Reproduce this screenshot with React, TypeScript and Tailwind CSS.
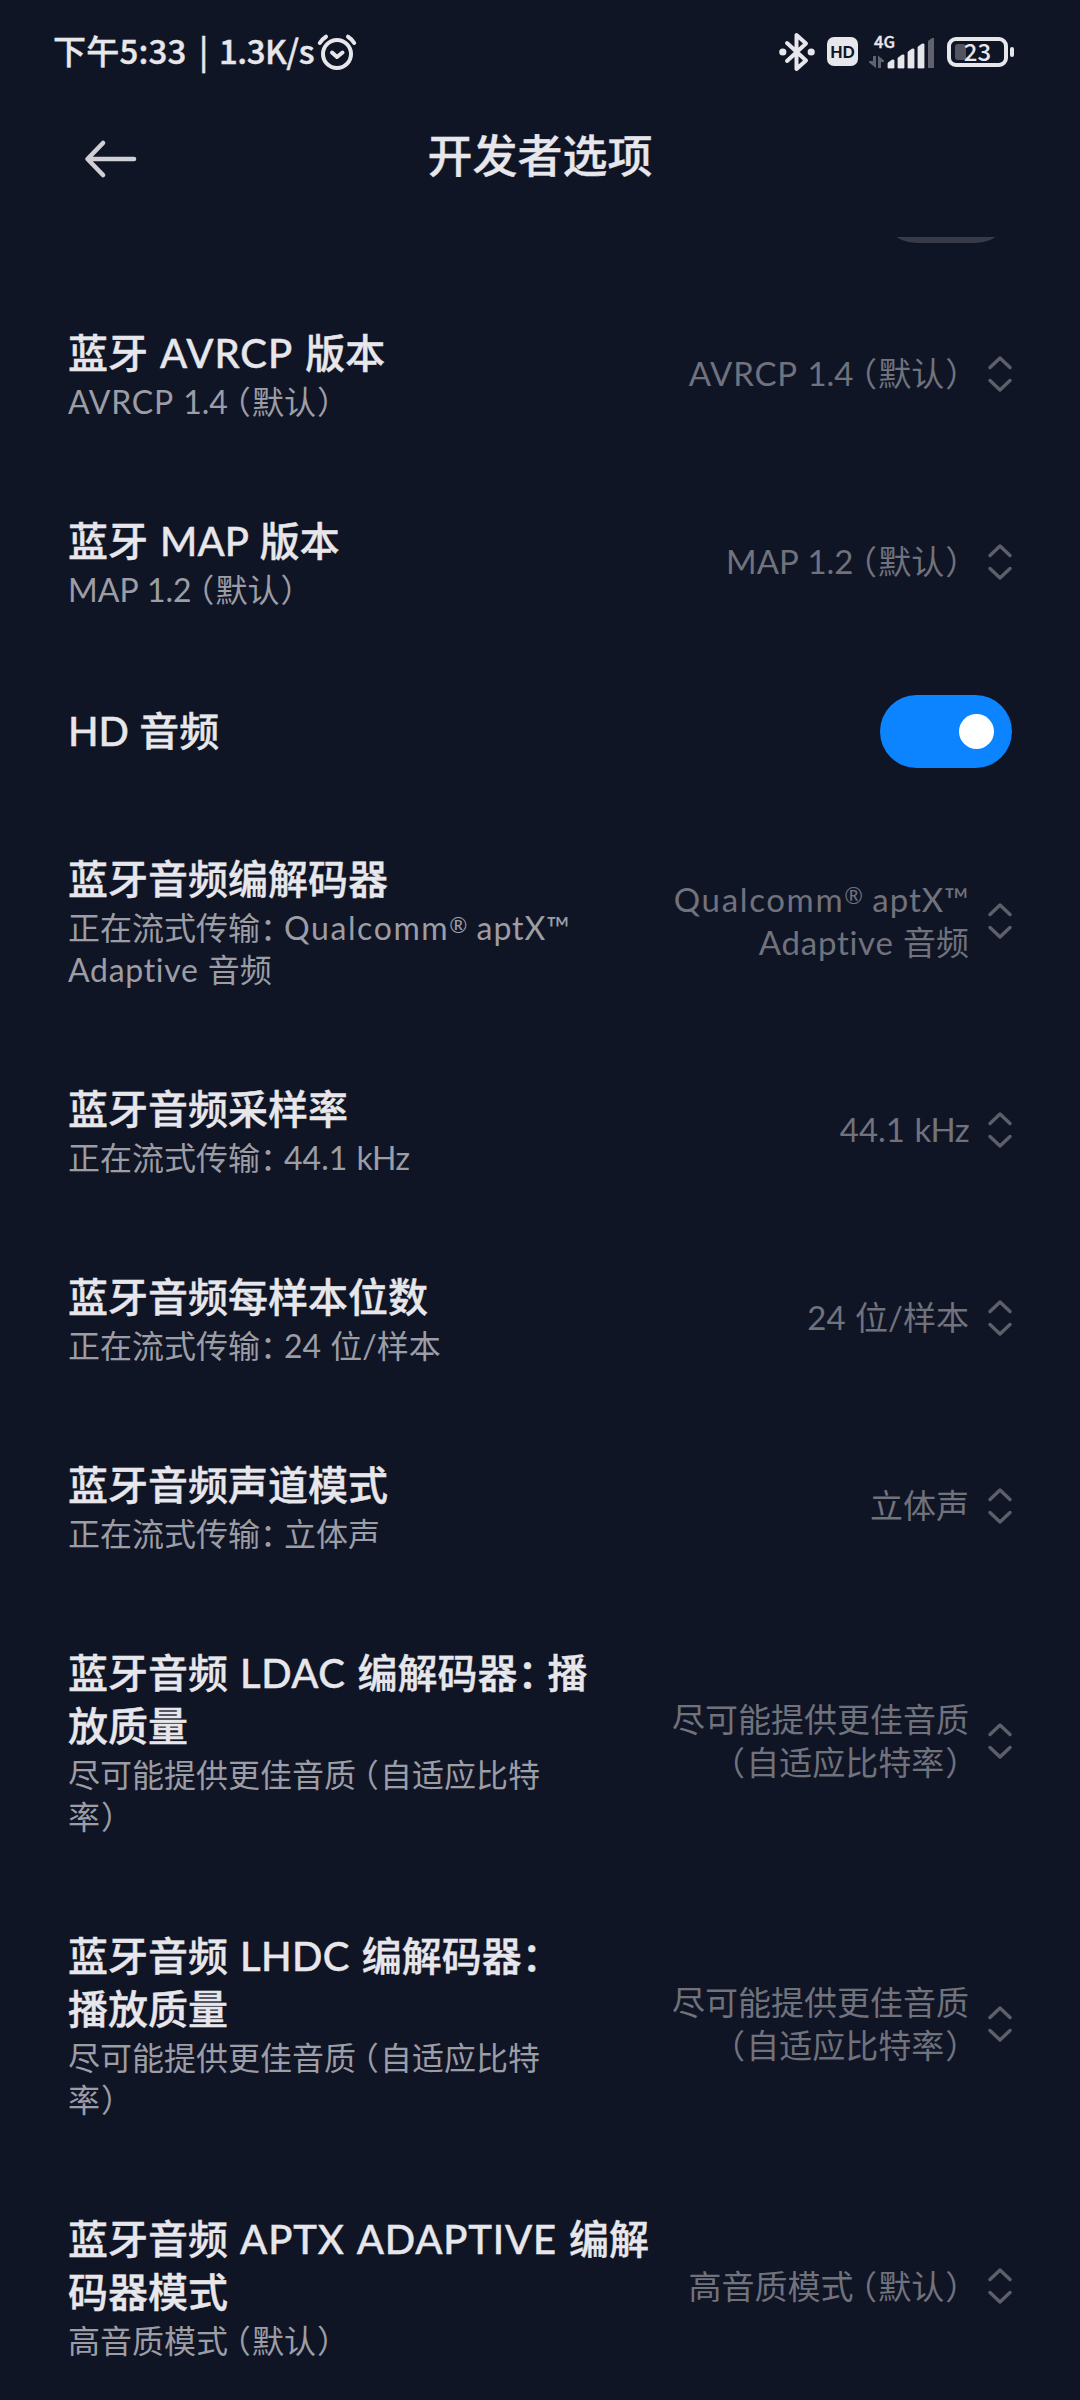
import React from "react";

type Item = {
    title: string[];
    sub: string[];
    value: string[];
};

const before: Item[] = [
    { title: ["蓝牙 AVRCP 版本"], sub: ["AVRCP 1.4（默认）"], value: ["AVRCP 1.4（默认）"] },
    { title: ["蓝牙 MAP 版本"], sub: ["MAP 1.2（默认）"], value: ["MAP 1.2（默认）"] },
];

const after: Item[] = [
    {
        title: ["蓝牙音频编解码器"],
        sub: ["正在流式传输：Qualcomm® aptX™", "Adaptive 音频"],
        value: ["Qualcomm® aptX™", "Adaptive 音频"],
    },
    { title: ["蓝牙音频采样率"], sub: ["正在流式传输：44.1 kHz"], value: ["44.1 kHz"] },
    { title: ["蓝牙音频每样本位数"], sub: ["正在流式传输：24 位/样本"], value: ["24 位/样本"] },
    { title: ["蓝牙音频声道模式"], sub: ["正在流式传输：立体声"], value: ["立体声"] },
    {
        title: ["蓝牙音频 LDAC 编解码器：播", "放质量"],
        sub: ["尽可能提供更佳音质（自适应比特", "率）"],
        value: ["尽可能提供更佳音质", "（自适应比特率）"],
    },
    {
        title: ["蓝牙音频 LHDC 编解码器：", "播放质量"],
        sub: ["尽可能提供更佳音质（自适应比特", "率）"],
        value: ["尽可能提供更佳音质", "（自适应比特率）"],
    },
    {
        title: ["蓝牙音频 APTX ADAPTIVE 编解", "码器模式"],
        sub: ["高音质模式（默认）"],
        value: ["高音质模式（默认）"],
    },
];

// full-width punctuation takes three quarters of a cell, latin words have their own tracking
const pieces: Record<string, string> = {
    "（": "inline-block w-[0.75em] pl-[0.21em] text-left [font-feature-settings:'halt']",
    "）": "inline-block w-[0.75em] pl-[0.03em] text-left [font-feature-settings:'halt']",
    "：": "inline-block w-[0.75em] text-left [font-feature-settings:'halt']",
    "®": "inline-block align-[0.34em] text-[0.68em] leading-none",
    AVRCP: "tracking-[0.025em]",
    LDAC: "tracking-[0.012em]",
    LHDC: "tracking-[0.008em]",
    ADAPTIVE: "tracking-[0.02em]",
    APTX: "tracking-[0.02em]",
    Qualcomm: "tracking-[0.05em]",
    Adaptive: "tracking-[0.022em]",
    aptX: "tracking-[0.03em]",
    kHz: "tracking-[-0.02em]",
};

function Line({ text }: { text: string }) {
    return (
        <div className="whitespace-nowrap">
            {text.split(/([（）：®]|AVRCP|LDAC|LHDC|ADAPTIVE|APTX|Qualcomm|Adaptive|aptX|kHz)/).map((part, i) => (
                <span key={i} className={pieces[part]}>{part}</span>
            ))}
        </div>
    );
}

function Arrows() {
    return (
        <svg className="ml-[18px] shrink-0" width="26" height="40" viewBox="0 0 26 40" fill="none" stroke="#5d5f6a" strokeWidth="3.4" strokeLinecap="round" strokeLinejoin="round">
            <path d="M3 13.500 13 4l10 9.500M3 26.500 13 36l10-9.500" />
        </svg>
    );
}

function Row({ item }: { item: Item }) {
    return (
        <div className="flex items-center justify-between pl-[68px] pr-[67px] pt-[47px] pb-[45px]">
            <div>
                <div className="text-[40px] leading-[53px] font-medium text-[#e7e7eb] [word-spacing:2px] [-webkit-text-stroke:0.4px]">
                    {item.title.map((t) => <Line key={t} text={t} />)}
                </div>
                <div className="mt-px text-[32px] leading-[42px] text-[#9c9da5] [word-spacing:1px]">
                    {item.sub.map((t) => <Line key={t} text={t} />)}
                </div>
            </div>
            <div className="flex items-center pb-[3px]">
                <div className="text-[33px] leading-[43px] text-right text-[#70727c] [word-spacing:1px]">
                    {item.value.map((t) => <Line key={t} text={t} />)}
                </div>
                <Arrows />
            </div>
        </div>
    );
}

function Toggle({ on }: { on?: boolean }) {
    if (!on) {
        return <div className="w-[132px] h-[73px] rounded-full bg-[#383a47]" />;
    }
    return (
        <div className="flex w-[132px] h-[73px] items-center justify-end rounded-full bg-[#0d84ff] pr-[18px]">
            <div className="size-[35px] rounded-full bg-white" />
        </div>
    );
}

function StatusBar() {
    return (
        <div className="flex h-[103px] shrink-0 items-center justify-between pl-[53px] pr-[66px] font-['Noto_Sans_CJK_SC',sans-serif] text-[#e7e7eb]">
            <div className="flex items-center">
                <div className="flex whitespace-pre pb-[3px] text-[33px] leading-[40px] font-medium [-webkit-text-stroke:0.4px]">
                    <span className="w-[146px] tracking-[0.2px]">下午5:33 </span>
                    <span className="w-[20px]">|</span>
                    <span className="w-[95px] tracking-[-0.5px]">1.3K/s</span>
                </div>
                <svg className="mt-[2px] ml-[2px]" width="42" height="40" viewBox="0 0 42 40" fill="none" stroke="#e7e7eb" strokeWidth="4" strokeLinecap="round" strokeLinejoin="round">
                    <circle cx="21" cy="21" r="14" />
                    <path d="M16 19.500 21 24l5.500-4.500M3.800 10c1.500-2.600 3.700-4.700 6.200-6.300M38.200 10c-1.500-2.600-3.700-4.700-6.200-6.300" />
                </svg>
            </div>
            <div className="flex items-center">
                <svg width="36" height="40" viewBox="0 0 36 40" fill="none" stroke="#e7e7eb" strokeWidth="4" strokeLinejoin="round" strokeLinecap="round">
                    <path d="M8 11 27 28.500 17.500 37V3L27 11.500 8 29" />
                    <circle cx="3.800" cy="20" r="1.600" fill="#e7e7eb" />
                    <circle cx="32.200" cy="20" r="1.600" fill="#e7e7eb" />
                </svg>
                <div className="ml-[12px] flex h-[29px] w-[31px] items-center justify-center rounded-[7px] bg-[#e7e7eb] font-['Lato',sans-serif] text-[16px] leading-none font-black text-[#101526]">HD</div>
                <div className="ml-[10px] flex h-[40px] w-[66px] flex-col pt-[2px]">
                    <span className="pl-[6px] text-[16.500px] leading-[14px] font-medium [-webkit-text-stroke:0.4px]">4G</span>
                    <svg className="-mt-[11px] shrink-0" width="66" height="32" viewBox="0 0 66 32">
                        <path d="M5 19h3v12L1 25.500V24h4zM10 31V18.500l6 5V25h-3v6z" fill="#60626e" />
                        <path d="M20 31v-5l4-3h2v8zM30 31V21l4-3h2v13zM40 31V15l4-3h2v19zM50 31V10l4-3h2v24z" fill="#e7e7eb" stroke="#e7e7eb" strokeWidth=".8" strokeLinejoin="round" />
                        <path d="M60 31V4l4-3h2v30z" fill="#60626e" />
                    </svg>
                </div>
                <div className="ml-[13px] flex items-center">
                    <div className="relative flex h-[30px] w-[61px] items-center justify-center rounded-[9px] border-4 border-[#e7e7eb]">
                        <div className="absolute left-[4px] top-[3px] h-[16px] w-[11px] rounded-[3px] bg-[#52545f]" />
                        <span className="relative pb-[2px] text-[24px] leading-[22px] font-medium">23</span>
                    </div>
                    <div className="ml-[2px] h-[10px] w-[4px] rounded-[2px] bg-[#e7e7eb]" />
                </div>
            </div>
        </div>
    );
}

function App() {
    return (
        <div className="flex h-[2400px] w-[1080px] flex-col overflow-hidden bg-[#101526] font-['Lato','Noto_Sans_CJK_SC',sans-serif]">
            <StatusBar />
            <div className="flex h-[134px] shrink-0 px-[84px]">
                <svg className="mt-[35px]" width="54" height="42" viewBox="0 0 54 42" fill="none" stroke="#cfcfd4" strokeWidth="4.600" strokeLinecap="round" strokeLinejoin="round">
                    <path d="M50 21H4M19 5 3.500 21 19 37" />
                </svg>
                <h1 className="mr-[54px] mt-[23px] flex-1 text-center text-[45px] leading-[60px] font-medium text-[#e7e7eb] [-webkit-text-stroke:0.3px]">开发者选项</h1>
            </div>
            {/* list is scrolled, the first row is cut by the header */}
            <div className="flex-1 overflow-hidden">
                <div className="-mt-[105px]">
                    <div className="flex h-[148px] items-center justify-end px-[68px]">
                        <Toggle />
                    </div>
                    {before.map((item) => <Row key={item.title[0]} item={item} />)}
                    <div className="flex h-[150px] items-center justify-between px-[68px]">
                        <span className="text-[40px] leading-[53px] font-medium text-[#e7e7eb] [-webkit-text-stroke:0.4px]">HD 音频</span>
                        <Toggle on />
                    </div>
                    {after.map((item) => <Row key={item.title[0]} item={item} />)}
                </div>
            </div>
        </div>
    );
}

export default App;
